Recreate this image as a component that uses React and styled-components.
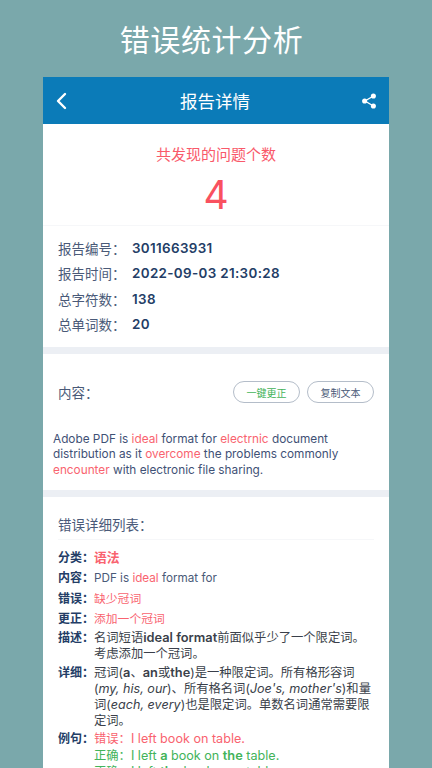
import React from "react";
import styled, { createGlobalStyle } from "styled-components";

const GlobalStyle = createGlobalStyle`
	html, body {
		margin: 0;
		padding: 0;
		height: 768px;
		overflow: hidden;
		background: #7aa8ab;
		font-family: Inter, "Noto Sans CJK SC", sans-serif;
	}
`;

const summary = [
	["报告编号：", "3011663931"],
	["报告时间：", "2022-09-03 21:30:28"],
	["总字符数：", "138"],
	["总单词数：", "20"],
];

export default function App() {
	return (
		<Page>
			<GlobalStyle />
			<Heading>错误统计分析</Heading>
			<Phone>
				<NavBar>
					<svg width="14" height="20" viewBox="0 0 14 20" fill="none">
						<path d="M11 3 L4 10 L11 17" stroke="#fff" strokeWidth="2.4" strokeLinecap="round" strokeLinejoin="round" />
					</svg>
					<NavTitle>报告详情</NavTitle>
					<ShareIcon width="14" height="16" viewBox="0 0 16 18" fill="none">
						<path d="M12.6 3.6 L3.4 9 L12.6 14.4" stroke="#fff" strokeWidth="1.5" />
						<circle cx="13" cy="3.2" r="2.9" fill="#fff" />
						<circle cx="3" cy="9" r="2.9" fill="#fff" />
						<circle cx="13" cy="14.8" r="2.9" fill="#fff" />
					</ShareIcon>
				</NavBar>
				<CountBlock>
					<CountLabel>共发现的问题个数</CountLabel>
					<CountValue>4</CountValue>
				</CountBlock>
				<SummaryBlock>
					{summary.map(([label, value]) => (
						<SummaryRow key={label}>
							<SummaryLabel>{label}</SummaryLabel>
							<SummaryValue>{value}</SummaryValue>
						</SummaryRow>
					))}
				</SummaryBlock>
				<ContentHead>
					<ContentLabel>内容：</ContentLabel>
					<Buttons>
						<PillButton $green>一键更正</PillButton>
						<PillButton>复制文本</PillButton>
					</Buttons>
				</ContentHead>
				<ContentText>
					Adobe PDF is <Red>ideal</Red> format for <Red>electrnic</Red> document
					distribution as it <Red>overcome</Red> the problems commonly{" "}
					<Red>encounter</Red> with electronic file sharing.
				</ContentText>
				<DetailBlock>
					<DetailTitle>错误详细列表：</DetailTitle>
					<DetailRow $single>
						<DetailKey>分类：</DetailKey>
						<DetailBody><Red><Strong>语法</Strong></Red></DetailBody>
					</DetailRow>
					<DetailRow $single>
						<DetailKey>内容：</DetailKey>
						<DetailBody $slate><Latin>PDF is <Red>ideal</Red> format for</Latin></DetailBody>
					</DetailRow>
					<DetailRow $single>
						<DetailKey>错误：</DetailKey>
						<DetailBody><Red>缺少冠词</Red></DetailBody>
					</DetailRow>
					<DetailRow $single>
						<DetailKey>更正：</DetailKey>
						<DetailBody><Red>添加一个冠词</Red></DetailBody>
					</DetailRow>
					<DetailRow $top={1}>
						<DetailKey>描述：</DetailKey>
						<DetailBody $long>
							名词短语<Strong>ideal format</Strong>前面似乎少了一个限定词。
							<br />
							考虑添加一个冠词。
						</DetailBody>
					</DetailRow>
					<DetailRow $top={1}>
						<DetailKey>详细：</DetailKey>
						<DetailBody $long>
							冠词(<Strong>a</Strong>、<Strong>an</Strong>或<Strong>the</Strong>)是一种限定词。所有格形容词
							<br />
							(<Em>my, his, our</Em>)、所有格名词(<Em>Joe's, mother's</Em>)和量
							<br />
							词(<Em>each, every</Em>)也是限定词。单数名词通常需要限
							<br />
							定词。
						</DetailBody>
					</DetailRow>
					<DetailRow $top={2}>
						<DetailKey>例句：</DetailKey>
						<DetailBody $long>
							<Red>错误：<Latin $wide>I left book on table.</Latin></Red>
							<br />
							<Green>正确：<Latin $wide>I left <Strong>a</Strong> book on <Strong>the</Strong> table.</Latin></Green>
							<br />
							<Green>正确：<Latin $wide>I left <Strong>the</Strong> book on <Strong>a</Strong> table.</Latin></Green>
						</DetailBody>
					</DetailRow>
				</DetailBlock>
			</Phone>
		</Page>
	);
}

const Page = styled.div`
	display: flex;
	flex-direction: column;
	align-items: center;
	width: 432px;
	height: 768px;
	overflow: hidden;
`;

const Heading = styled.h1`
	flex: none;
	margin: 0 9px 0 0;
	height: 77px;
	line-height: 80px;
	color: #fff;
	font-size: 30px;
	font-weight: 400;
	letter-spacing: 0.6px;
`;

const Phone = styled.div`
	flex: none;
	width: 346px;
	background: #fff;
	color: #3f5176;
`;

const NavBar = styled.div`
	display: grid;
	grid-template-columns: 1fr auto 1fr;
	align-items: center;
	height: 47px;
	padding: 0 13px 0 11px;
	background: #0b7bb8;
`;

const ShareIcon = styled.svg`
	justify-self: end;
`;

const NavTitle = styled.div`
	color: #fff;
	font-size: 17.5px;
`;

const CountBlock = styled.div`
	display: flex;
	flex-direction: column;
	align-items: center;
	box-sizing: border-box;
	height: 102px;
	border-bottom: 1px solid #f6f7f9;
`;

const CountLabel = styled.div`
	margin-top: 21px;
	color: #f9596a;
	font-size: 15px;
	line-height: 20px;
`;

const CountValue = styled.div`
	margin-top: 8px;
	color: #f9515f;
	font-size: 39px;
	line-height: 44px;
`;

const SummaryBlock = styled.div`
	padding: 9.5px 15px 10.5px;
	border-bottom: 7px solid #eceff4;
`;

const SummaryRow = styled.div`
	display: flex;
	align-items: center;
	height: 25.3px;
`;

const SummaryLabel = styled.div`
	width: 74px;
	color: #4a5a78;
	font-size: 13.5px;
	white-space: nowrap;
`;

const SummaryValue = styled.div`
	color: #233d66;
	font-size: 13.4px;
	font-weight: 600;
	letter-spacing: 0.35px;
`;

const ContentHead = styled.div`
	display: flex;
	align-items: center;
	justify-content: space-between;
	height: 76px;
	padding: 0 15px;
`;

const ContentLabel = styled.div`
	color: #4a5a78;
	font-size: 13.5px;
`;

const Buttons = styled.div`
	display: flex;
	gap: 7px;
`;

const PillButton = styled.div`
	display: flex;
	align-items: center;
	justify-content: center;
	box-sizing: border-box;
	width: 67px;
	height: 22px;
	border: 1px solid #b4bdc9;
	border-radius: 11px;
	background: #fff;
	color: ${(p) => (p.$green ? "#43b35a" : "#4a5a78")};
	font-size: 10px;
`;

const ContentText = styled.div`
	padding: 2px 10px 12px;
	border-bottom: 7px solid #eceff4;
	font-size: 11.8px;
	line-height: 15.3px;
`;

const Red = styled.span`
	color: #f9636f;
`;

const Green = styled.span`
	color: #43b35a;
`;

const Strong = styled.b`
	font-size: 12.8px;
	font-weight: 600;
`;

const Em = styled.i`
	font-size: 12.6px;
`;

const Latin = styled.span`
	font-size: ${(p) => (p.$wide ? "12.6px" : "11.7px")};
`;

const DetailBlock = styled.div`
	padding: 0 15px;
`;

const DetailTitle = styled.div`
	box-sizing: border-box;
	height: 43px;
	padding-top: 14px;
	line-height: 28px;
	margin-bottom: 8px;
	border-bottom: 1px solid #f6f7f9;
	color: #4a5a78;
	font-size: 13.5px;
`;

const DetailRow = styled.div`
	display: flex;
	margin-top: ${(p) => p.$top || 0}px;
	margin-bottom: ${(p) => (p.$single ? "0.4px" : "2px")};
	font-size: 12px;
	line-height: ${(p) => (p.$single ? "20px" : "16.2px")};
`;

const DetailKey = styled.div`
	flex: none;
	width: 36px;
	color: #233d66;
	font-weight: 600;
	white-space: nowrap;
`;

const DetailBody = styled.div`
	flex: 1;
	white-space: nowrap;
	font-size: ${(p) => (p.$long ? "12.3px" : "11.8px")};
	color: ${(p) => (p.$slate ? "#4a5a78" : "#3a3f4a")};
`;
